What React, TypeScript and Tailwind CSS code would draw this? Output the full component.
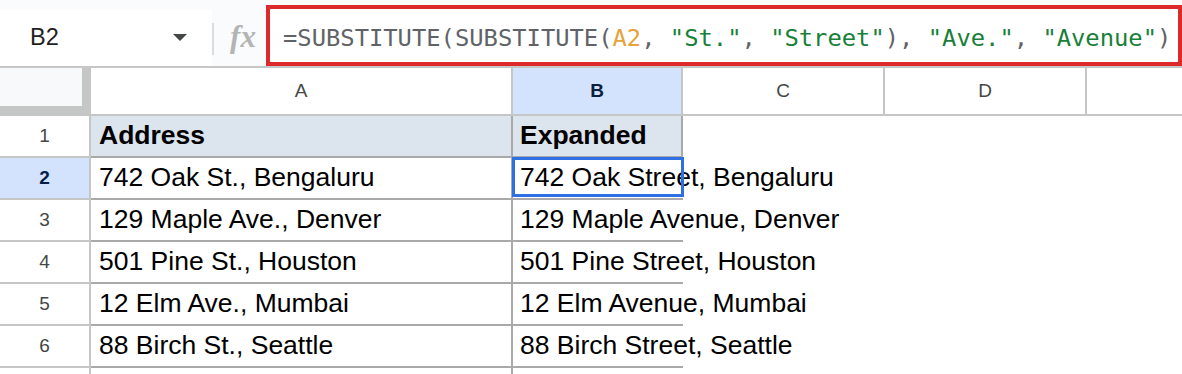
import React from "react";

const rows = [
  ["742 Oak St., Bengaluru", "742 Oak Street, Bengaluru"],
  ["129 Maple Ave., Denver", "129 Maple Avenue, Denver"],
  ["501 Pine St., Houston", "501 Pine Street, Houston"],
  ["12 Elm Ave., Mumbai", "12 Elm Avenue, Mumbai"],
  ["88 Birch St., Seattle", "88 Birch Street, Seattle"],
];

const Formula = () => (
  <span className="whitespace-pre font-['DejaVu_Sans_Mono',monospace] text-[23.8px] text-[#5f6368]">
    =SUBSTITUTE(SUBSTITUTE(<span className="text-[#e8a23a]">A2</span>,{" "}
    <span className="text-[#188038]">"St."</span>, <span className="text-[#188038]">"Street"</span>),{" "}
    <span className="text-[#188038]">"Ave."</span>, <span className="text-[#188038]">"Avenue"</span>)
  </span>
);

const App = () => {
  return (
    <div className="w-[1182px] h-[374px] overflow-hidden bg-white font-['Liberation_Sans',Arial,sans-serif]">
      {/* formula bar */}
      <div className="flex h-[68px] bg-[#f9fbfd] border-b-2 border-[#c7c7c7]">
        <div className="shrink-0 mt-[10px] h-[56px] w-[212px] bg-white flex items-center justify-between pl-[30px] pr-[25px]">
          <span className="text-[23.5px] text-[#1f1f1f]">B2</span>
          <svg width="14" height="8" viewBox="0 0 14 8">
            <path d="M0 0 L14 0 L7 7 Z" fill="#444746" />
          </svg>
        </div>
        <div className="shrink-0 mt-[23px] h-[32px] w-[2px] bg-[#dadce0]" />
        <div className="shrink-0 w-[52px] flex items-center justify-center pt-[8px] pl-[6px]">
          <span className="font-['Liberation_Serif',serif] italic font-bold text-[31px] text-[#b4b4b4]">fx</span>
        </div>
        <div className="min-w-0 mt-[5px] h-[61px] flex-1 border-4 border-[#dc2a2a] bg-white flex items-center pl-[13px] pt-[6px] overflow-hidden">
          <Formula />
        </div>
      </div>

      {/* column headers */}
      <div className="flex h-[48px] text-[19px] text-[#444746]">
        <div className="shrink-0 w-[91px] h-full bg-[#c4c7c5]">
          <div className="w-[82px] h-[38px] bg-[#f8f9fa]" />
        </div>
        <div className="shrink-0 w-[422px] h-full border-r-2 border-b-2 border-[#c4c7c5] flex items-center justify-center">A</div>
        <div className="shrink-0 w-[170px] h-full border-r-2 border-b-2 border-[#c4c7c5] bg-[#d3e3fd] flex items-center justify-center font-bold text-[#0b1f3f]">
          B
        </div>
        <div className="shrink-0 w-[202px] h-full border-r-2 border-b-2 border-[#c4c7c5] flex items-center justify-center">C</div>
        <div className="shrink-0 w-[202px] h-full border-r-2 border-b-2 border-[#c4c7c5] flex items-center justify-center">D</div>
        <div className="flex-1 h-full border-b-2 border-[#c4c7c5]" />
      </div>

      {/* header row */}
      <div className="flex h-[42px] text-[26.5px] text-black">
        <div className="shrink-0 w-[91px] border-r-2 border-b-2 border-[#c4c7c5] flex items-center justify-center text-[19px] text-[#444746]">
          1
        </div>
        <div className="shrink-0 w-[422px] border-r-2 border-b-2 border-[#a9a9a9] bg-[#dce4ee] flex items-center pl-[8px] font-bold">
          Address
        </div>
        <div className="shrink-0 w-[170px] border-r-2 border-b-2 border-[#a9a9a9] bg-[#dce4ee] flex items-center pl-[7px] font-bold">
          Expanded
        </div>
        <div className="flex-1" />
      </div>

      {rows.map(([a, b], i) => {
        const selected = i === 0;
        return (
          <div key={i} className="flex h-[42px] text-[26.5px] text-black">
            <div
              className={
                selected
                  ? "shrink-0 w-[91px] border-r-2 border-b-2 border-[#c4c7c5] bg-[#d3e3fd] flex items-center justify-center text-[19px] font-bold text-[#041e49]"
                  : "shrink-0 w-[91px] border-r-2 border-b-2 border-[#c4c7c5] flex items-center justify-center text-[19px] text-[#444746]"
              }
            >
              {i + 2}
            </div>
            <div className="shrink-0 w-[422px] border-r-2 border-b-2 border-[#a9a9a9] flex items-center pl-[8px] whitespace-nowrap">
              {a}
            </div>
            <div className="shrink-0 relative w-[170px] border-b-2 border-[#a9a9a9] flex items-center pl-[7px] whitespace-nowrap">
              {b}
              {selected && (
                <div className="absolute -top-[1px] -left-[1px] -right-[1px] bottom-[1px] border-[3.5px] border-[#2f6fe4]" />
              )}
            </div>
            <div className="flex-1" />
          </div>
        );
      })}

      {/* partial row 7 */}
      <div className="flex h-[42px]">
        <div className="shrink-0 w-[91px] border-r-2 border-[#c4c7c5]" />
        <div className="shrink-0 w-[422px] border-r-2 border-[#a9a9a9]" />
      </div>
    </div>
  );
};

export default App;
